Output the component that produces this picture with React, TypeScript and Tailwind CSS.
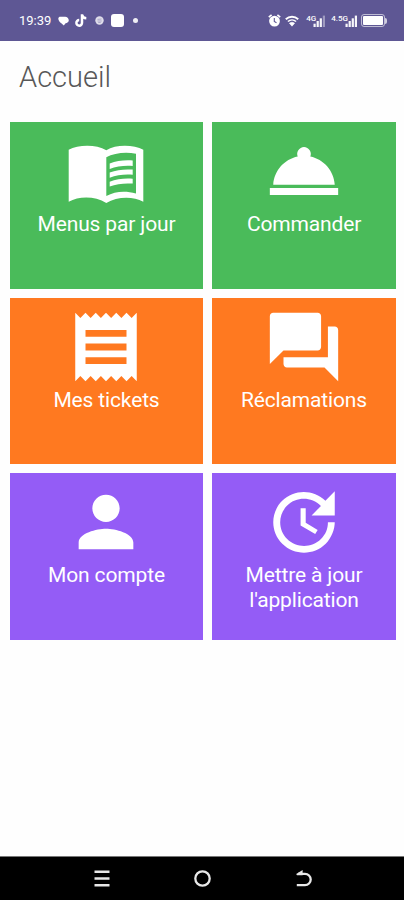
import type { ComponentType, ReactNode } from 'react';
import {
  MdPerson,
  MdQuestionAnswer,
  MdReceipt,
  MdRoomService,
  MdUpdate,
} from 'react-icons/md';

type Tile = {
  label: ReactNode;
  icon: ComponentType<{ className?: string }>;
  color: string;
};

function MenuBook({ className }: { className?: string }) {
  return (
    <svg className={className} viewBox="0 0 82 82" fill="currentColor">
      <path
        fillRule="evenodd"
        d="M3.7 19.8C13 14.5 31 14 41.3 20.2 51 14 69 14.5 78.3 19.8v52C68 66 52 66.5 41.3 73 30 66 14 66 3.7 71.8zM41.3 27.2C49 23 61 21.5 71 23.8v39.8C60 60.5 50 61.5 41.3 66z"
      />
      <path d="M44.7 33.4c7-2.8 15-3.6 23-3v5.6c-8-.6-16 .2-23 3zM44.7 42.6c7-2.8 15-3.6 23-3v5.2c-8-.6-16 .2-23 3zM44.7 51.8c7-2.8 15-3.6 23-3v4.8c-8-.6-16 .2-23 3z" />
    </svg>
  );
}

const tiles: Tile[] = [
  { label: 'Menus par jour', icon: MenuBook, color: 'bg-[#4abb5a]' },
  { label: 'Commander', icon: MdRoomService, color: 'bg-[#4abb5a]' },
  { label: 'Mes tickets', icon: MdReceipt, color: 'bg-[#ff7920]' },
  { label: 'Réclamations', icon: MdQuestionAnswer, color: 'bg-[#ff7920]' },
  { label: 'Mon compte', icon: MdPerson, color: 'bg-[#945cf6]' },
  {
    label: (
      <>
        Mettre à jour
        <br />
        l'application
      </>
    ),
    icon: MdUpdate,
    color: 'bg-[#945cf6]',
  },
];

function Signal({ label, bars }: { label: string; bars: number }) {
  return (
    <div className="flex h-3">
      <span className="text-[8px] leading-[7px] font-medium">{label}</span>
      <svg className="-ml-[3px] h-3 w-[13px]" viewBox="0 0 13 12" fill="currentColor">
        {[0, 1, 2, 3].map((i) => (
          <rect
            key={i}
            x={0.5 + i * 3.1}
            y={8.7 - i * 2.7}
            width="2.2"
            height={3.3 + i * 2.7}
            opacity={i < bars ? 0.95 : 0.4}
          />
        ))}
      </svg>
    </div>
  );
}

function StatusBar() {
  return (
    <div className="flex h-[41px] items-center justify-between bg-[#5e5794] pl-[19px] pr-[17px] text-white">
      <div className="flex items-center">
        <span className="w-[33px] text-[13px] leading-none">19:39</span>
        <svg className="ml-1.5 h-[10px] w-[11px]" viewBox="0 0 11 10" fill="currentColor">
          <path d="M2.2.8h5c1.8 0 3.6 1.8 3.6 3.4 0 1.7-1.6 2.8-3.2 3.1L5.8 9.4 3.6 7.5C1.8 6.5.2 4 .3 2.4.5 1.3 1.2.8 2.2.8z" />
        </svg>
        <svg className="ml-1.5 h-[13px] w-3" viewBox="0 0 12 13" fill="none" stroke="currentColor">
          <path d="M7 .2v8.6a2.8 2.8 0 1 1-2.8-2.7M7 .8c.3 2.1 1.9 3.4 4.3 3.5" strokeWidth="2.5" />
        </svg>
        <svg className="ml-2 h-[9px] w-[9px]" viewBox="0 0 9 9">
          <circle cx="4.5" cy="4.5" r="4.2" fill="white" opacity=".8" />
          <path d="M2.5 3.4l4-.4M2.5 5h4.2M3.2 6.5h2.5" stroke="#5e5794" strokeWidth=".4" />
        </svg>
        <div className="ml-[7px] h-[13px] w-[13px] rounded-[3px] bg-white" />
        <div className="ml-[9px] h-[5px] w-[5px] rounded-full bg-white/90" />
      </div>
      <div className="flex items-center">
        <svg className="h-[13px] w-[13px]" viewBox="0 0 13 13">
          <path d="M.8 3.2L3.6.9M12.2 3.2L9.4.9" stroke="white" strokeWidth="1.7" />
          <circle cx="6.5" cy="7.1" r="5.4" fill="white" />
          <path d="M6.3 4v3.4l2.2 1.4" fill="none" stroke="#5e5794" strokeWidth="1.1" />
        </svg>
        <svg className="ml-1 h-3 w-[14px]" viewBox="0 0 14 12" fill="none" stroke="white">
          <path d="M.8 4.2c3.6-3.3 8.8-3.3 12.4 0" strokeWidth="2" />
          <path d="M2.9 6.5c2.4-2.1 5.8-2.1 8.2 0" strokeWidth="1.6" />
          <path d="M4.4 8.2c1.6-1.2 3.6-1.2 5.2 0L7 11.2z" fill="white" strokeWidth=".6" />
        </svg>
        <div className="ml-[7px] flex gap-[5px]">
          <Signal label="4G" bars={3} />
          <Signal label="4.5G" bars={4} />
        </div>
        <div className="ml-[3px] flex items-center">
          <div className="h-[13px] w-6 rounded-[3px] border border-white/60 p-px">
            <div className="h-full rounded-[1px] bg-white" />
          </div>
          <div className="h-1.5 w-[2px] rounded-r-sm bg-white/70" />
        </div>
      </div>
    </div>
  );
}

function NavBar() {
  return (
    <div className="grid h-11 grid-cols-3 items-center border-t border-[#777] bg-black pl-[52px] pr-[50px] text-[#e8e8e8]">
      <svg className="h-[17px] w-4 justify-self-center" viewBox="0 0 16 17" stroke="currentColor" strokeWidth="2.4">
        <path d="M.5 1.7h15M.5 8.5h15M.5 15.3h15" />
      </svg>
      <svg className="h-[17px] w-[17px] justify-self-center" viewBox="0 0 17 17" fill="none" stroke="currentColor" strokeWidth="2.3">
        <circle cx="8.5" cy="8.5" r="7.2" />
      </svg>
      <svg className="h-[17px] w-4 justify-self-center" viewBox="0 0 16 17" fill="none" stroke="currentColor" strokeWidth="2.3">
        <path d="M2 3.8h7a5.7 5.7 0 0 1 0 11.4H.8" />
        <path d="M.2 4L6.6 0v5.2H1z" fill="currentColor" stroke="none" />
      </svg>
    </div>
  );
}

export default function App() {
  return (
    <div className="flex h-[900px] w-[404px] flex-col bg-[#fefefe] font-['Roboto','Liberation_Sans',sans-serif]">
      <StatusBar />
      <h1 className="h-[81px] pl-[19px] pt-[19px] text-[29px] leading-[34px] font-light text-[#585858]">
        Accueil
      </h1>
      <main className="grid grid-cols-[193px_184px] auto-rows-[166.5px] gap-[9px] pl-[10px]">
        {tiles.map(({ label, icon: Icon, color }, index) => (
          <div key={index} className={`flex flex-col items-center pt-2 text-white ${color}`}>
            <Icon className="mr-px size-[82px] shrink-0" />
            <p className="text-center text-[21px] leading-[25px] tracking-[-0.15px]">{label}</p>
          </div>
        ))}
      </main>
      <div className="mt-auto">
        <NavBar />
      </div>
    </div>
  );
}
